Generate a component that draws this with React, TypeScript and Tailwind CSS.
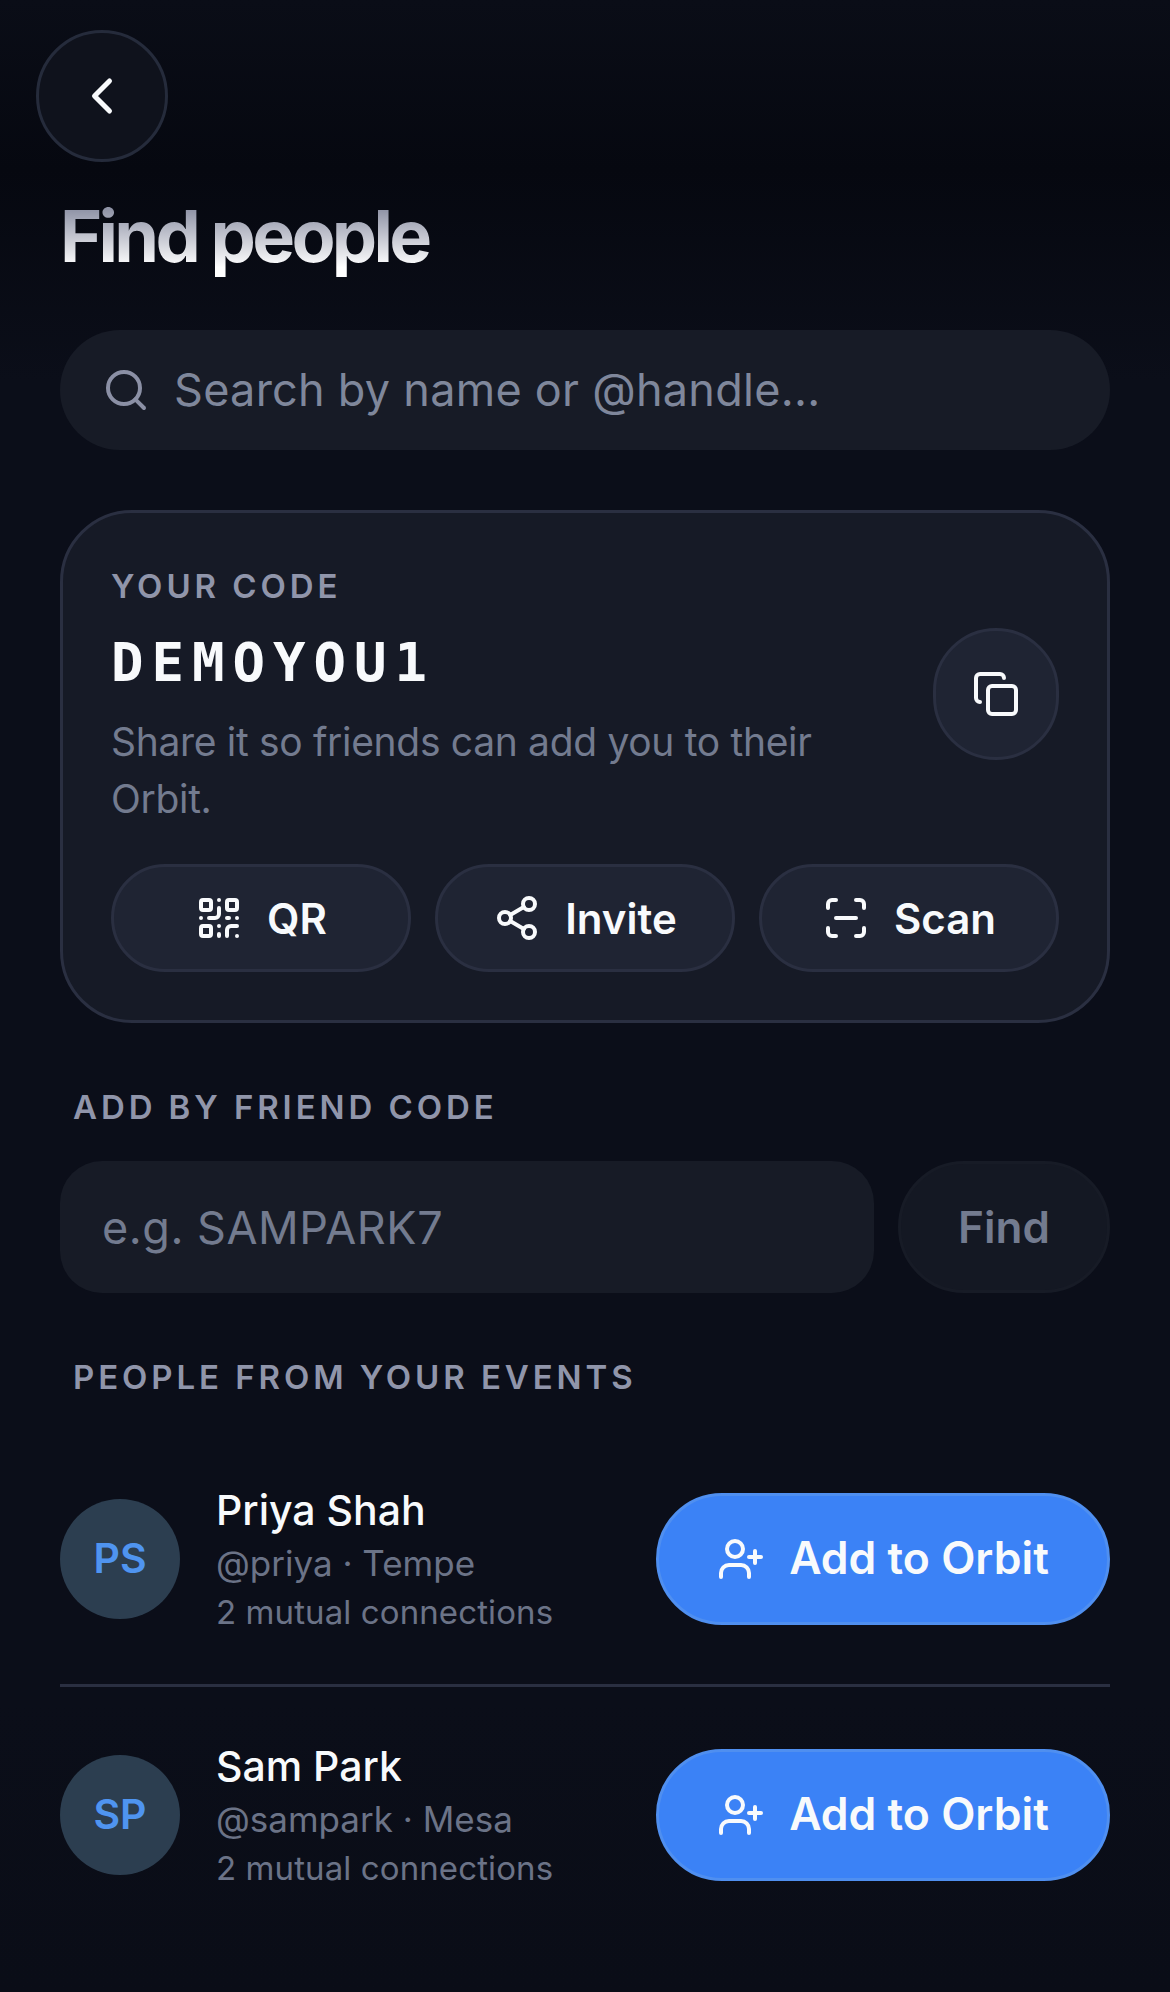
import { ChevronLeft, Search, Copy, QrCode, Share2, ScanLine, UserPlus } from "lucide-react";

function ActionButton({ icon, label }: { icon: React.ReactNode; label: string }) {
  return (
    <button className="flex h-[108px] min-w-0 flex-1 items-center justify-center gap-[24px] rounded-full border-[3px] border-[#2a2f41] bg-[#1f2433] text-[42px] font-semibold text-[#f8fafc]">
      {icon}
      <span>{label}</span>
    </button>
  );
}

function SectionLabel({ children }: { children: React.ReactNode }) {
  return (
    <div className="pl-[13px] text-[33px] font-semibold leading-[48px] tracking-[3.9px] text-[#9095aa]">{children}</div>
  );
}

function PersonRow({ initials, name, sub, divider }: { initials: string; name: string; sub: string; divider?: boolean }) {
  return (
    <div className={divider ? "flex items-center gap-[36px] border-b-[3px] border-[#2a2f41] pt-[50px] pb-[48px]" : "flex items-center gap-[36px] pt-[50px] pb-[48px]"}>
      <div className="flex h-[120px] w-[120px] shrink-0 items-center justify-center rounded-full bg-[#2c3e50] text-[41px] font-semibold text-[#4f94f0]">
        {initials}
      </div>
      <div className="min-w-0 flex-1 pt-[2px]">
        <div className="text-[41px] font-medium leading-[54px] text-[#f8fafc]">{name}</div>
        <div className="mt-[2px] text-[35px] leading-[48px] text-[#6b7387]">{sub}</div>
        <div className="mt-[1px] text-[33px] leading-[48px] tracking-[0.1px] text-[#6b7387]">2 mutual connections</div>
      </div>
      <button className="flex h-[132px] w-[454px] shrink-0 items-center justify-center gap-[24px] rounded-full border-[3px] border-[#4f8ff0] bg-[#3b82f6] text-[44.5px] font-semibold text-[#f8fafc]">
        <UserPlus size={48} strokeWidth={2} />
        <span>Add to Orbit</span>
      </button>
    </div>
  );
}

export default function App() {
  return (
    <div className="min-h-[1992px] w-full bg-[linear-gradient(to_bottom,#0a0d17_0px,#060810_170px,#0b0e19_380px,#0b0e19_1700px,#0a0d17_100%)] font-['Inter',sans-serif]">
      <div className="px-[36px] pt-[30px]">
        <button className="flex h-[132px] w-[132px] items-center justify-center rounded-full border-[3px] border-[#252b3b] bg-[#0f121c] text-[#f8fafc]">
          <ChevronLeft size={60} strokeWidth={2} />
        </button>
      </div>
      <div className="px-[60px]">
        <h1 className="mt-[29px] bg-[linear-gradient(to_bottom,#8f93a6_20%,#ffffff_85%)] bg-clip-text text-[72px] font-bold leading-[90px] tracking-[-3.7px] text-transparent">
          Find people
        </h1>
        <div className="mt-[49px] flex h-[120px] items-center gap-[24px] rounded-full bg-[#171b26] px-[42px]">
          <Search size={48} strokeWidth={2} className="shrink-0 text-[#8b90a5]" />
          <input
            readOnly
            placeholder="Search by name or @handle..."
            className="min-w-0 flex-1 bg-transparent text-[45px] tracking-[0.27px] text-[#f8fafc] outline-none placeholder:text-[#7f879b]"
          />
        </div>

        <div className="mt-[60px] rounded-[72px] border-[3px] border-[#2a2f41] bg-[#161a26] p-[48px]">
          <div className="flex items-center justify-between gap-[36px]">
            <div className="min-w-0 flex-1">
              <div className="text-[33px] font-semibold leading-[50px] tracking-[3.9px] text-[#9095aa]">YOUR CODE</div>
              <div className="mt-[16px] font-['DejaVu_Sans_Mono',monospace] text-[54px] font-bold leading-[72px] tracking-[8px] text-[#f8fafc]">
                DEMOYOU1
              </div>
              <div className="mt-[14px] text-[39px] leading-[57px] tracking-[-0.32px] text-[#737b8f]">
                Share it so friends can add you to their Orbit.
              </div>
            </div>
            <button className="flex h-[132px] w-[126px] shrink-0 items-center justify-center rounded-full border-[3px] border-[#2a2f41] bg-[#1f2433] text-[#f8fafc]">
              <Copy size={48} strokeWidth={2} />
            </button>
          </div>
          <div className="mt-[37px] flex gap-[24px]">
            <ActionButton icon={<QrCode size={48} strokeWidth={2} />} label="QR" />
            <ActionButton icon={<Share2 size={48} strokeWidth={2} />} label="Invite" />
            <ActionButton icon={<ScanLine size={48} strokeWidth={2} />} label="Scan" />
          </div>
        </div>

        <div className="mt-[60px]">
          <SectionLabel>ADD BY FRIEND CODE</SectionLabel>
        </div>
        <div className="mt-[30px] flex gap-[24px]">
          <input
            readOnly
            placeholder="e.g. SAMPARK7"
            className="h-[132px] min-w-0 flex-1 rounded-[42px] bg-[#171b26] px-[42px] text-[45px] tracking-[0.54px] text-[#f8fafc] outline-none placeholder:text-[#737b8f]"
          />
          <button className="h-[132px] w-[212px] shrink-0 rounded-full border-[3px] border-[#171b26] bg-[#141823] text-[44px] font-semibold text-[#737b8f]">
            Find
          </button>
        </div>

        <div className="mt-[60px]">
          <SectionLabel>PEOPLE FROM YOUR EVENTS</SectionLabel>
        </div>
        <div className="mt-[30px]">
          <PersonRow initials="PS" name="Priya Shah" sub="@priya · Tempe" divider />
          <PersonRow initials="SP" name="Sam Park" sub="@sampark · Mesa" />
        </div>
      </div>
    </div>
  );
}
